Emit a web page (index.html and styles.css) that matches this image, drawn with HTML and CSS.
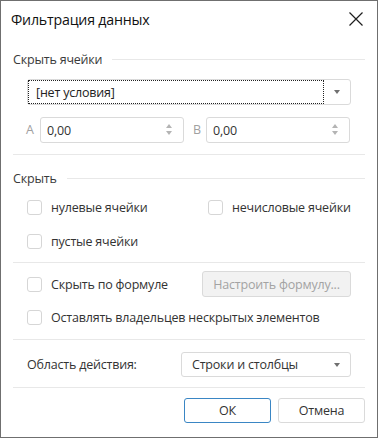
FILE: index.html
```html
<!DOCTYPE html>
<html lang="ru">
<head>
<meta charset="utf-8">
<title>Фильтрация данных</title>
<link rel="stylesheet" href="styles.css">
</head>
<body>
<div class="dialog">
  <div class="titlebar">
    <span class="title">Фильтрация данных</span>
    <svg class="close" width="14" height="14" viewBox="0 0 14 14"><path d="M0.5 0.5L13.5 13.5M13.5 0.5L0.5 13.5" stroke="#1e1e1e" stroke-width="1.2" fill="none"/></svg>
  </div>
  <div class="content">
    <div class="group-head g1"><span>Скрыть ячейки</span><i class="rule"></i></div>
    <div class="select cond">
      <span class="focus">[нет условия]</span>
      <span class="arrow-box"><i class="tri-down"></i></span>
    </div>
    <div class="range">
      <span class="lbl">A</span>
      <div class="spin"><span>0,00</span><span class="spin-btn"><i class="tri-up light"></i><i class="tri-down light"></i></span></div>
      <span class="lbl lbl-b">B</span>
      <div class="spin"><span>0,00</span><span class="spin-btn"><i class="tri-up light"></i><i class="tri-down light"></i></span></div>
    </div>
    <div class="sep s1"></div>
    <div class="group-head g2"><span>Скрыть</span><i class="rule"></i></div>
    <div class="check-grid r1">
      <label class="check"><i class="box"></i><span>нулевые ячейки</span></label>
      <label class="check"><i class="box"></i><span>нечисловые ячейки</span></label>
    </div>
    <div class="check-grid r2">
      <label class="check"><i class="box"></i><span>пустые ячейки</span></label>
    </div>
    <div class="sep s2"></div>
    <div class="formula-row">
      <label class="check"><i class="box"></i><span>Скрыть по формуле</span></label>
      <div class="btn disabled">Настроить формулу...</div>
    </div>
    <div class="owners-row">
      <label class="check"><i class="box"></i><span>Оставлять владельцев нескрытых элементов</span></label>
    </div>
    <div class="sep s3"></div>
    <div class="scope-row">
      <span class="scope-lbl">Область действия:</span>
      <div class="select scope"><span class="val">Строки и столбцы</span><span class="arrow-box"><i class="tri-down"></i></span></div>
    </div>
    <div class="sep s4"></div>
    <div class="buttons">
      <div class="btn primary">ОК</div>
      <div class="btn">Отмена</div>
    </div>
  </div>
</div>
</body>
</html>
```
FILE: styles.css
```css
* { box-sizing: border-box; }
html, body { margin: 0; padding: 0; background: #fff; }
body {
  font-family: "Open Sans", "Noto Sans", "Liberation Sans", sans-serif;
  font-size: 12.5px;
  letter-spacing: -0.2px;
  color: #333;
}
.dialog {
  width: 378px;
  height: 438px;
  border: 1px solid #6f6f6f;
  background: #fff;
  display: flex;
  flex-direction: column;
}
.titlebar {
  height: 39px;
  flex: none;
  display: flex;
  align-items: center;
  justify-content: space-between;
  padding: 0 14px 0 10px;
}
.title { font-size: 14.2px; color: #111; line-height: 20px; margin-top: -2px; }
.close { display: block; margin-top: -3px; }

.content { padding: 0 12px; display: flex; flex-direction: column; }

.group-head {
  height: 20px;
  display: flex;
  align-items: center;
  color: #3a3a3a;
}
.group-head span { line-height: 20px; }
.group-head .rule { flex: 1; height: 1px; background: #e8e8e8; margin-left: 10px; margin-top: -1px; }
.g1 { margin-top: 10px; }
.g2 { margin-top: 14px; }

.sep { height: 1px; background: #e8e8e8; flex: none; }
.s1 { margin-top: 11px; }
.s2 { margin-top: 9px; }
.s3 { margin-top: 10px; }
.s4 { margin-top: 10px; }

.select {
  height: 26px;
  border: 1px solid #dadada;
  border-radius: 3px;
  display: flex;
  align-items: stretch;
  background: #fff;
}
.cond { margin: 9px 14px 0 14px; }
.focus {
  flex: 1;
  border: 1px dotted #222;
  display: flex;
  align-items: center;
  padding-left: 7px;
  color: #222;
}
.arrow-box { width: 26px; display: flex; align-items: center; justify-content: center; }
.tri-down {
  width: 0; height: 0;
  border-left: 3.5px solid transparent;
  border-right: 3.5px solid transparent;
  border-top: 4px solid #707070;
}
.tri-up {
  width: 0; height: 0;
  border-left: 3.5px solid transparent;
  border-right: 3.5px solid transparent;
  border-bottom: 4px solid #707070;
}
.tri-up.light { border-bottom-color: #b4b4b4; }
.tri-down.light { border-top-color: #b4b4b4; }

.range {
  margin-top: 12px;
  height: 26px;
  display: flex;
  align-items: center;
  padding-left: 13px;
}
.lbl { width: 14px; color: #a0a0a0; margin-top: -2px; }
.lbl-b { margin-left: 9px; width: 13px; }
.spin {
  width: 144px;
  height: 26px;
  border: 1px solid #dadada;
  border-radius: 3px;
  display: flex;
  align-items: center;
  justify-content: space-between;
  padding-left: 6px;
  color: #333;
}
.spin-btn {
  width: 26px;
  display: flex;
  flex-direction: column;
  align-items: center;
  gap: 3px;
  margin-top: -2px;
  padding-right: 2px;
}

.check { display: flex; align-items: center; gap: 9px; color: #333; height: 24px; }
.box {
  width: 15px; height: 15px;
  border: 1px solid #d6d6d6;
  border-radius: 3px;
  background: #fff;
  flex: none;
}
.check-grid {
  display: grid;
  grid-template-columns: 181px 1fr;
  padding-left: 14px;
}
.r1 { margin-top: 6px; }
.r2 { margin-top: 10px; }

.formula-row {
  margin-top: 8px;
  height: 26px;
  display: flex;
  align-items: center;
  justify-content: space-between;
  padding-left: 14px;
  padding-right: 14px;
}
.btn {
  height: 25px;
  border: 1px solid #dadada;
  border-radius: 3px;
  display: flex;
  align-items: center;
  justify-content: center;
  background: #fff;
  color: #333;
}
.btn.disabled { width: 149px; background: #f2f2f2; color: #a3a3a3; height: 26px; }
.owners-row { margin-top: 8px; padding-left: 14px; }

.scope-row {
  margin-top: 12px;
  display: flex;
  align-items: center;
  padding-left: 14px;
  padding-right: 14px;
  justify-content: space-between;
}
.scope { width: 170px; height: 25px; }
.scope .val { flex: 1; display: flex; align-items: center; padding-left: 10px; color: #333; }

.buttons {
  margin-top: 10px;
  display: flex;
  justify-content: flex-end;
  gap: 7px;
  padding-right: 0;
}
.buttons .btn { width: 87px; }
.btn.primary { border-color: #3a86c4; }
```
